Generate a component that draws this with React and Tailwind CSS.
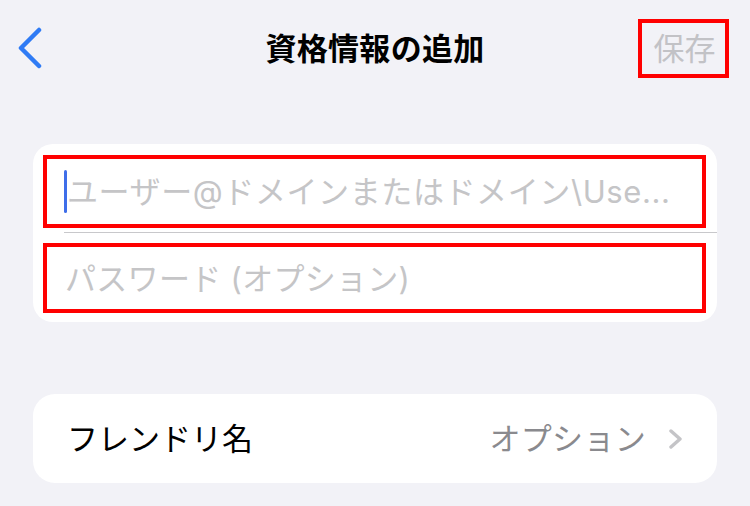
const font = "font-['Inter','Noto_Sans_CJK_JP',sans-serif]";

function BackChevron() {
  return (
    <svg width="26" height="42" viewBox="0 0 26 42" fill="none">
      <path
        d="M22 3 L4 21 L22 39"
        stroke="#2f7bf5"
        strokeWidth="4.5"
        strokeLinecap="round"
        strokeLinejoin="round"
      />
    </svg>
  );
}

function RowChevron() {
  return (
    <svg width="16" height="20" viewBox="0 0 16 20" fill="none">
      <path
        d="M3 2 L12 10 L3 18"
        stroke="#c4c4c7"
        strokeWidth="3.4"
        strokeLinecap="round"
        strokeLinejoin="round"
      />
    </svg>
  );
}

export default function App() {
  return (
    <div className={`${font} h-[506px] w-[750px] overflow-hidden bg-[#f2f2f7]`}>
      {/* nav bar */}
      <div className="grid h-[96px] grid-cols-[1fr_auto_1fr] items-center">
        <div className="flex pl-[17px]">
          <BackChevron />
        </div>
        <h1 className="text-[31px] font-bold leading-none tracking-[0.3px] text-black">資格情報の追加</h1>
        <div className="flex justify-end pr-[21px]">
          <div className="flex h-[59px] w-[91px] items-center justify-center border-4 border-[#ff0000] pl-[2px]">
            <span className="text-[31px] leading-none text-[#c2c2c6]">保存</span>
          </div>
        </div>
      </div>

      {/* credentials */}
      <div className="mx-[33px] mt-[48px] rounded-[20px] bg-white pb-[9px] pt-[11px]">
        <div className="ml-[10px] mr-[11px] flex h-[73px] items-center border-4 border-[#ff0000] pl-[17px]">
          <div className="h-[43px] w-[3px] rounded-full bg-[#3f6ee9]" />
          <span className="whitespace-nowrap text-[31px] leading-none tracking-[0.6px] text-[#c5c5c7]">
            {"ユーザー@ドメインまたはドメイン\\Use..."}
          </span>
        </div>
        <div className="ml-[31px] mt-[4px] h-px bg-[#c8c8cb]" />
        <div className="ml-[10px] mr-[11px] mt-[10px] flex h-[70px] items-center border-4 border-[#ff0000] pl-[18px]">
          <span className="whitespace-nowrap text-[31px] leading-none tracking-[0.3px] text-[#c5c5c7]">
            パスワード (オプション)
          </span>
        </div>
      </div>

      {/* friendly name */}
      <div className="mx-[33px] mt-[72px] flex h-[89px] items-center justify-between rounded-[22px] bg-white pl-[34px] pr-[33px]">
        <span className="text-[31px] leading-none text-black">フレンドリ名</span>
        <div className="flex items-center gap-[22px]">
          <span className="text-[31px] leading-none tracking-[0.3px] text-[#8a8a8e]">オプション</span>
          <RowChevron />
        </div>
      </div>
    </div>
  );
}
